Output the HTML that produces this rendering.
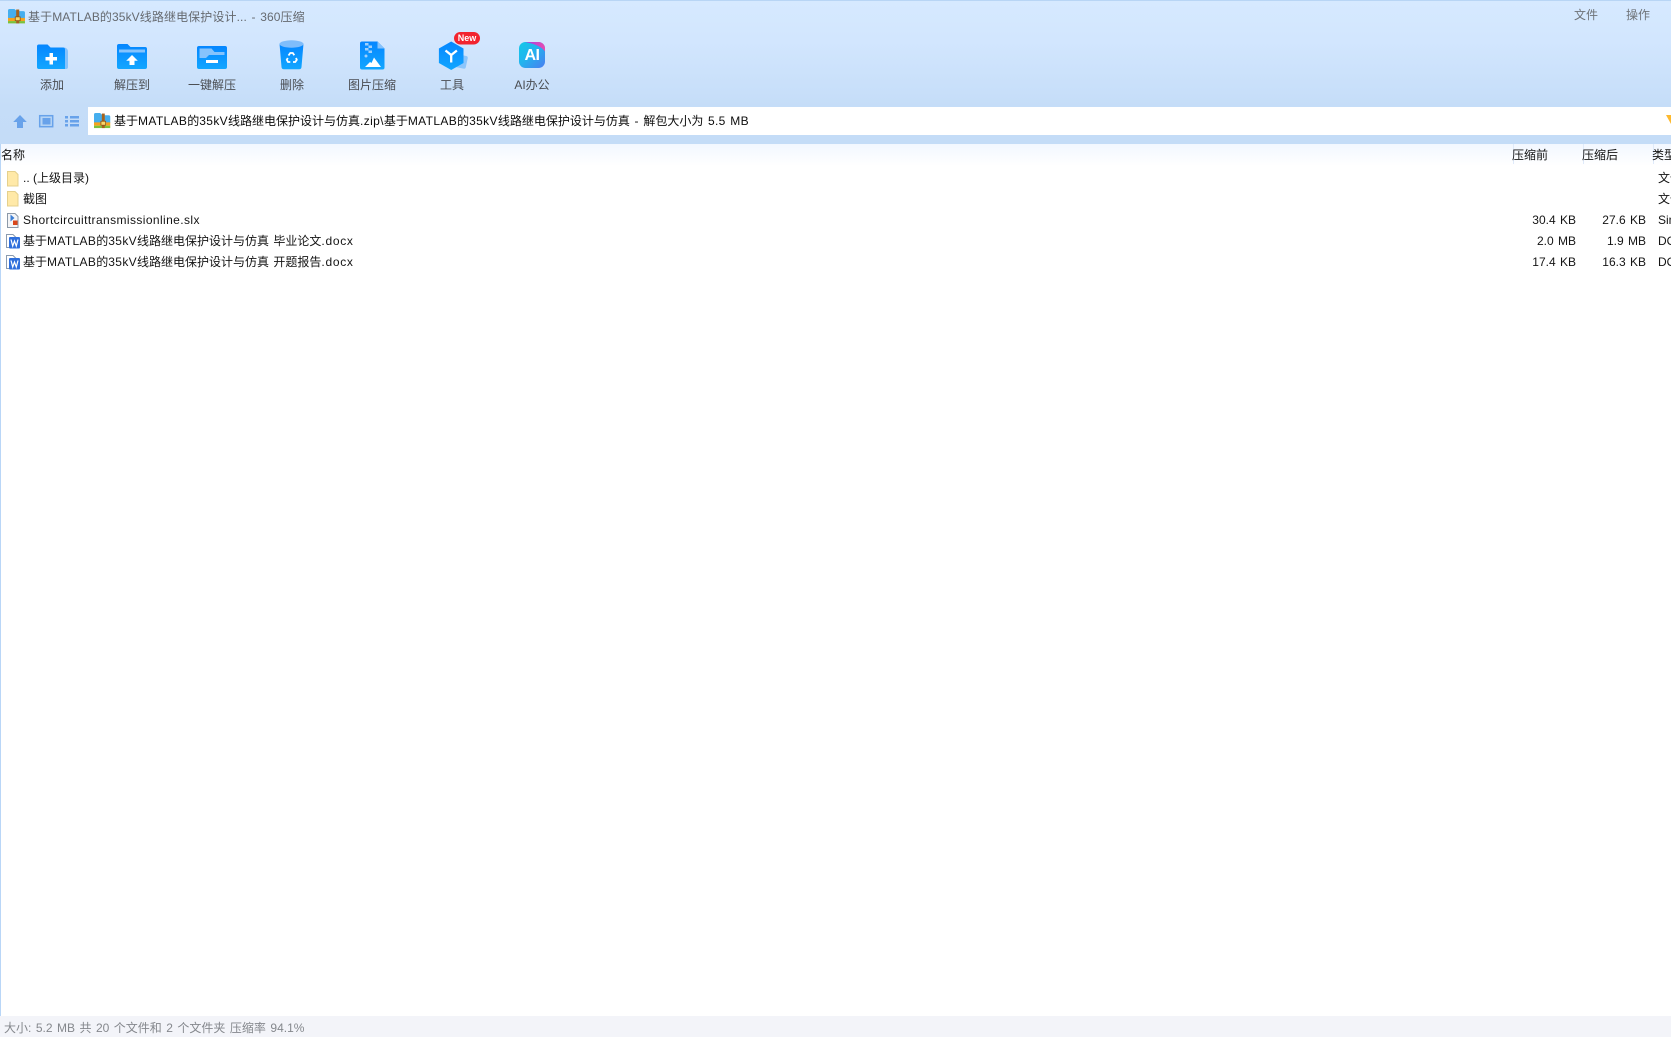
<!DOCTYPE html>
<html lang="zh-CN"><head><meta charset="utf-8"><title>360压缩</title>
<style>
html,body{margin:0;padding:0;width:1671px;height:1037px;overflow:hidden;background:#fff}
body{position:relative;font-family:"Liberation Sans","Noto Sans CJK SC",sans-serif;font-size:12px;color:#141414}
.a{position:absolute;white-space:nowrap;line-height:18px;height:18px}
.top{position:absolute;left:0;top:0;width:1671px;height:144px;background:linear-gradient(#d6e9ff 0,#d2e6fe 40px,#c5ddf8 105px,#c4dcf7 144px);border-top:1px solid #b8d5f5;box-sizing:border-box}
.addr{position:absolute;left:88px;top:107px;width:1583px;height:28px;background:#fff}
.hdr{position:absolute;left:0;top:144px;width:1671px;height:22px;background:linear-gradient(#f2f7ff,#fff)}
.sep{position:absolute;top:144px;width:1px;height:20px;background:#dfeafa}
.left{position:absolute;left:0;top:144px;width:1px;height:872px;background:#b9d6f7}
.st{position:absolute;left:0;top:1016px;width:1671px;height:21px;background:#f3f4f9}
.l{color:#4a4d52;transform:translateX(-50%);text-align:center}
.r{text-align:right;word-spacing:1px}
.m{letter-spacing:.35px}
.w{word-spacing:.9px}
svg{position:absolute;left:0;top:0}
</style></head><body>
<div class="top"></div><div class="addr"></div><div class="hdr"></div>
<div class="sep" style="left:1513px"></div><div class="sep" style="left:1583px"></div><div class="sep" style="left:1653px"></div>
<div class="left"></div><div class="st"></div>

<svg width="1671" height="1037" viewBox="0 0 1671 1037">
<defs>
<linearGradient id="b" x1="0" y1="0" x2="0" y2="1"><stop offset="0" stop-color="#0586ff"/><stop offset="1" stop-color="#12a6ff"/></linearGradient>
<linearGradient id="ai" x1="0" y1="0" x2="1" y2="1"><stop offset="0" stop-color="#12c8e8"/><stop offset=".45" stop-color="#22b4ee"/><stop offset="1" stop-color="#4a7cf0"/></linearGradient>
<linearGradient id="ai2" x1="0" y1="0" x2="1" y2="0"><stop offset="0" stop-color="#a040e8"/><stop offset="1" stop-color="#e84cb0"/></linearGradient>
<g id="zip">
<path d="M0 1.500A1.500 1.500 0 0 1 1.500 0H5.500L7.500 2H13A1.500 1.500 0 0 1 14.500 3.500V9H0Z" fill="#45aeee"/>
<rect x="0" y="8.500" width="14.500" height="3" fill="#f6a21e"/>
<rect x="0" y="11.500" width="14.500" height="2.200" fill="#7cc13a"/>
<rect x="7" y="0.500" width="2.600" height="13.200" fill="#a5631e"/>
<rect x="6.200" y="7.500" width="4.200" height="3.600" fill="#f8d66a" stroke="#8a5216" stroke-width=".7"/>
</g>
<g id="fold"><path d="M7.500 171.500h7.500l3 3v11.500H7.500z" fill="#ffe9a8" stroke="#e5d08c"/></g>
<g id="word">
<path d="M6.500 0.500H13L16 3.500V13.500H6.500Z" fill="#fff" stroke="#8a9bb0"/>
<rect x="9" y="3" width="11" height="11.500" rx="1" fill="#2f6fdc"/>
<path d="M11 5.500L12.700 12L14.500 7L16.300 12L18 5.500" fill="none" stroke="#fff" stroke-width="1.200"/>
</g>
</defs>

<use href="#zip" transform="translate(8 9) scale(1.17 1.05)"/>

<!-- add -->
<path d="M37 46.500a2 2 0 0 1 2-2h8.500l3 3H64a4 4 0 0 1 4 4V67a2 2 0 0 1-2 2H39a2 2 0 0 1-2-2Z" fill="#86c2fb"/>
<path d="M37 46.500a2 2 0 0 1 2-2h8.500l3 3H63a2 2 0 0 1 2 2V69H39a2 2 0 0 1-2-2Z" fill="url(#b)"/>
<path d="M49.500 53h3.500v4h4v3.500h-4v4h-3.500v-4h-4v-3.500h4Z" fill="#fff"/>

<!-- extract to -->
<path d="M117 46a2 2 0 0 1 2-2h8.500l3 3H145a2 2 0 0 1 2 2V67a2 2 0 0 1-2 2H119a2 2 0 0 1-2-2Z" fill="url(#b)"/>
<rect x="119" y="49.500" width="26" height="3" fill="#85c3fc"/>
<path d="M132 55l5.800 5.800h-3.300V65h-5v-4.200h-3.300Z" fill="#fff"/>

<!-- one click -->
<rect x="197" y="46" width="30" height="23" rx="2" fill="url(#b)"/>
<path d="M199.500 48.500h12l3 3.500h10v3h-15.500l-3 3h-6.500Z" fill="#85c3fc"/>
<rect x="206" y="60" width="12" height="3" fill="#fff"/>

<!-- delete -->
<path d="M279.500 43.500h24L301.500 67a2.500 2.500 0 0 1-2.500 2.300h-15A2.500 2.500 0 0 1 281.500 67Z" fill="url(#b)"/>
<ellipse cx="291.500" cy="44" rx="12" ry="3.700" fill="#7fbdfb"/>
<g fill="none" stroke="#fff" stroke-width="1.800">
<path d="M288.500 55.500l1.800-2.500h2.500l1.500 2.200"/>
<path d="M296 58l.8 1.800-1.500 2.200h-2.300"/>
<path d="M290.300 62h-2.300l-1.200-2.200 1-1.800"/>
</g>

<!-- image compress -->
<path d="M362 41.500h15.500l7 7v19a2 2 0 0 1-2 2H362a2 2 0 0 1-2-2V43.500a2 2 0 0 1 2-2Z" fill="url(#b)"/>
<path d="M377.500 41.500l7 7h-7Z" fill="#86c2fb"/>
<g fill="#9fd0fc"><rect x="365" y="43" width="3.500" height="2.500"/><rect x="368.500" y="45.500" width="3.500" height="2.500"/><rect x="365" y="48" width="3.500" height="2.500"/><rect x="368.500" y="50.500" width="3.500" height="2.500"/></g>
<circle cx="366" cy="56" r="1.500" fill="#9fd0fc"/>
<path d="M365 67l5-5 1.500 1 2.500-5.500 7 9.500Z" fill="#fff"/>

<!-- tools -->
<rect x="456" y="55" width="11" height="13" rx="2" fill="#8cc5fb" transform="rotate(12 461 61)"/>
<path d="M451.200 41.500l12.300 7v14.500l-12.300 7-12.300-7V48.500Z" fill="url(#b)"/>
<path d="M445.500 50.500l5.700 4.500 5.700-4.500M451.200 55v7.500" fill="none" stroke="#fff" stroke-width="2.300"/>
<rect x="454" y="32" width="26" height="12.500" rx="6.250" fill="#f2242f"/>

<!-- AI -->
<rect x="519" y="42" width="26" height="26" rx="6.500" fill="url(#ai)"/>
<path d="M525 42h13.500a6.500 6.500 0 0 1 6.500 6.500v3c-4-6-13-8-20-9.500Z" fill="url(#ai2)"/>

<!-- nav -->
<path d="M20 115l6.800 7h-3.800v6h-6v-6h-3.800Z" fill="#68a2ea"/>
<rect x="39.700" y="115.700" width="13" height="11" fill="#b6d4f5" stroke="#68a2ea" stroke-width="1.500"/>
<rect x="42.500" y="118" width="8" height="6.500" fill="#68a2ea"/>
<g fill="#68a2ea"><rect x="65" y="116" width="3" height="2.500"/><rect x="70" y="116" width="9" height="2.500"/><rect x="65" y="120" width="3" height="2.500"/><rect x="70" y="120" width="9" height="2.500"/><rect x="65" y="124" width="3" height="2.500"/><rect x="70" y="124" width="9" height="2.500"/></g>
<use href="#zip" transform="translate(94 113) scale(1.12 1.1)"/>
<path d="M1666 115h5v9Z" fill="#fdb92e"/>

<!-- file icons -->
<use href="#fold"/>
<use href="#fold" y="20"/>
<path d="M7.500 213.500H15l3 3v11H7.500Z" fill="#f4f5f7" stroke="#8c99a8"/>
<path d="M10.500 214.500l4 3.500-4 3.500Z" fill="#3b7ed6"/>
<rect x="13" y="220.500" width="4.500" height="4.500" fill="#d9471c"/>
<use href="#word" y="234"/>
<use href="#word" y="255"/>
</svg>

<span class="a" style="left:28px;top:8px;color:#666a70;letter-spacing:.1px;word-spacing:1.200px">基于MATLAB的35kV线路继电保护设计... - 360压缩</span>
<span class="a" style="left:1574px;top:6px;color:#6f7378">文件</span>
<span class="a" style="left:1626px;top:6px;color:#6f7378">操作</span>

<span class="a l" style="left:52px;top:76px">添加</span>
<span class="a l" style="left:132px;top:76px">解压到</span>
<span class="a l" style="left:212px;top:76px">一键解压</span>
<span class="a l" style="left:292px;top:76px">删除</span>
<span class="a l" style="left:372px;top:76px">图片压缩</span>
<span class="a l" style="left:452px;top:76px">工具</span>
<span class="a l" style="left:532px;top:76px">AI办公</span>
<span class="a" style="left:454px;width:26px;top:29px;color:#fff;font-size:9px;font-weight:bold;text-align:center">New</span>
<span class="a" style="left:519px;width:26px;top:47px;color:#fff;font-size:16px;font-weight:bold;text-align:center;letter-spacing:-.5px">AI</span>

<span class="a w" style="left:114px;top:112px;color:#0c0c0c">基于<span class="m">MATLAB</span>的<span class="m">35kV</span>线路继电保护设计与仿真<span class="m">.zip\</span>基于<span class="m">MATLAB</span>的<span class="m">35kV</span>线路继电保护设计与仿真<span class="m"> - </span>解包大小为<span class="m"> 5.5 MB</span></span>

<span class="a" style="left:1px;top:146px">名称</span>
<span class="a" style="left:1512px;top:146px">压缩前</span>
<span class="a" style="left:1582px;top:146px">压缩后</span>
<span class="a" style="left:1652px;top:146px">类型</span>

<span class="a" style="left:23px;top:169px">.. (上级目录)</span>
<span class="a" style="left:23px;top:190px">截图</span>
<span class="a" style="left:23px;top:211px;letter-spacing:.4px">Shortcircuittransmissionline.slx</span>
<span class="a" style="left:23px;top:232px">基于<span class="m">MATLAB</span>的<span class="m">35kV</span>线路继电保护设计与仿真<span style="letter-spacing:1px"> </span>毕业论文<span style="letter-spacing:.7px">.docx</span></span>
<span class="a" style="left:23px;top:253px">基于<span class="m">MATLAB</span>的<span class="m">35kV</span>线路继电保护设计与仿真<span style="letter-spacing:1px"> </span>开题报告<span style="letter-spacing:.7px">.docx</span></span>

<span class="a" style="left:1658px;top:169px">文件夹</span>
<span class="a" style="left:1658px;top:190px">文件夹</span>
<span class="a" style="left:1658px;top:211px">Simulink</span>
<span class="a" style="left:1658px;top:232px">DOCX</span>
<span class="a" style="left:1658px;top:253px">DOCX</span>

<span class="a r" style="right:95px;top:211px">30.4 KB</span>
<span class="a r" style="right:25px;top:211px">27.6 KB</span>
<span class="a r" style="right:95px;top:232px">2.0 MB</span>
<span class="a r" style="right:25px;top:232px">1.9 MB</span>
<span class="a r" style="right:95px;top:253px">17.4 KB</span>
<span class="a r" style="right:25px;top:253px">16.3 KB</span>

<span class="a" style="left:4px;top:1019px;color:#85888d;word-spacing:1.150px">大小: 5.2 MB 共 20 个文件和 2 个文件夹 压缩率 94.1%</span>
</body></html>
